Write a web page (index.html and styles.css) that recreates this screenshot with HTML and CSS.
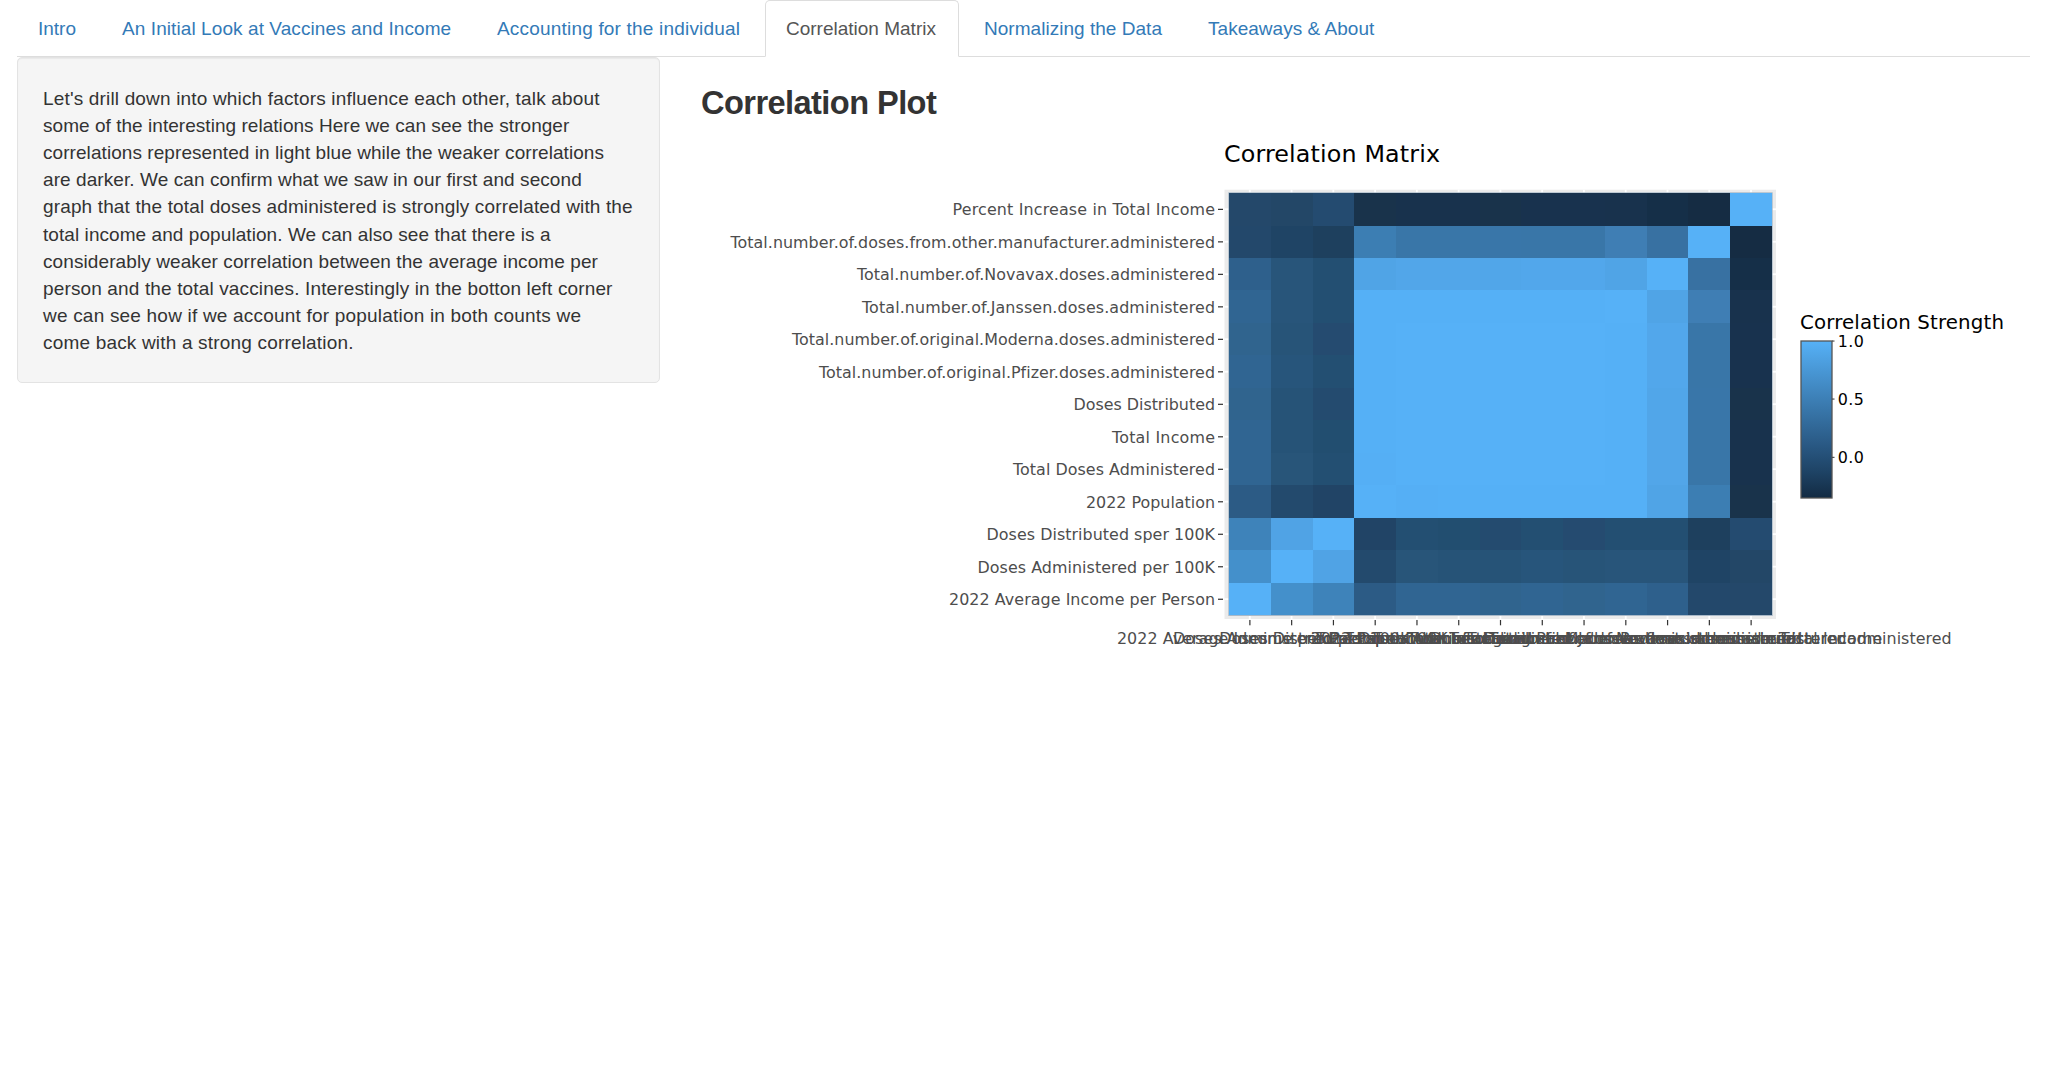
FILE: index.html
```html
<!DOCTYPE html>
<html lang="en">
<head>
<meta charset="utf-8">
<title>Correlation Matrix</title>
<link rel="stylesheet" href="styles.css">
</head>
<body>
<ul class="tabs">
  <li><a class="t1">Intro</a></li>
  <li><a class="t2">An Initial Look at Vaccines and Income</a></li>
  <li><a class="t3">Accounting for the individual</a></li>
  <li><a class="t4 active">Correlation Matrix</a></li>
  <li><a class="t5">Normalizing the Data</a></li>
  <li><a class="t6">Takeaways &amp; About</a></li>
</ul>
<div class="row">
  <aside class="well">
    <p>
      <span class="l1">Let's drill down into which factors influence each other, talk about</span>
      <span class="l2">some of the interesting relations Here we can see the stronger</span>
      <span class="l3">correlations represented in light blue while the weaker correlations</span>
      <span class="l4">are darker. We can confirm what we saw in our first and second</span>
      <span class="l5">graph that the total doses administered is strongly correlated with the</span>
      <span class="l6">total income and population. We can also see that there is a</span>
      <span class="l7">considerably weaker correlation between the average income per</span>
      <span class="l8">person and the total vaccines. Interestingly in the botton left corner</span>
      <span class="l9">we can see how if we account for population in both counts we</span>
      <span class="l10">come back with a strong correlation.</span>
    </p>
  </aside>
  <main class="main">
    <h3>Correlation Plot</h3>
    <svg id="plot" class="plot" width="1329" height="544" viewBox="701 133 1329 544"></svg>
  </main>
</div>
<script src="plot.js"></script>
</body>
</html>
```
FILE: styles.css
```css
* { box-sizing: border-box; }
body {
  margin: 0;
  padding: 0 18px 0 17px;
  background: #fff;
  color: #333;
  font-family: "Liberation Sans", Arial, sans-serif;
  font-size: 19px;
  line-height: 27.2px;
}
.tabs {
  display: flex;
  gap: 3px;
  margin: 0;
  padding: 0;
  height: 57px;
  list-style: none;
  border-bottom: 1px solid #ddd;
}
.tabs a {
  display: block;
  height: 57px;
  padding: 14px 0 0 20px;
  border: 1px solid transparent;
  border-radius: 5px 5px 0 0;
  color: #337ab7;
  white-space: nowrap;
}
.tabs a.active {
  color: #555;
  background: #fff;
  border-color: #ddd #ddd #fff;
}
.tabs .t1 { width: 81px; }
.tabs .t2 { width: 372px; letter-spacing: .085px; }
.tabs .t3 { width: 286px; letter-spacing: .19px; }
.tabs .t4 { width: 194px; }
.tabs .t5 { width: 221px; padding-left: 21px; letter-spacing: .03px; }
.tabs .t6 { width: 210px; padding-left: 21px; letter-spacing: .03px; }
.row { display: flex; gap: 41px; }
.well {
  width: 643px;
  height: 326px;
  padding: 26.6px 0 0 25px;
  background: #f5f5f5;
  border: 1px solid #e3e3e3;
  border-radius: 5px;
  box-shadow: inset 0 1px 1px rgba(0,0,0,.05);
}
.well p { margin: 0; }
.well span { display: block; white-space: nowrap; }
.l1 { letter-spacing: .165px; }
.l2 { letter-spacing: .04px; }
.l3 { letter-spacing: .066px; }
.l4 { letter-spacing: .077px; }
.l5 { letter-spacing: .14px; }
.l6 { letter-spacing: .068px; }
.l7 { letter-spacing: .094px; }
.l8 { letter-spacing: .14px; }
.l9 { letter-spacing: .2px; }
.l10 { letter-spacing: .18px; }
.main { width: 1329px; }
h3 {
  height: 76px;
  margin: 0;
  padding-top: 28px;
  font-size: 32.6px;
  line-height: 36px;
  font-weight: bold;
  letter-spacing: -0.57px;
}
.plot { display: block; font-family: "DejaVu Sans", Verdana, sans-serif; font-variant-ligatures: none; }
.tick { font-size: 15.9px; fill: #4d4d4d; }
.legend-tick { font-size: 15.9px; fill: #000; }
.title { font-size: 23.8px; fill: #000; }
.legend-title { font-size: 19.8px; fill: #000; }
```
FILE: plot.js
```js
const NS = 'http://www.w3.org/2000/svg';
const svg = document.getElementById('plot');
function add(tag, attrs, text) {
  const e = document.createElementNS(NS, tag);
  for (const k in attrs) e.setAttribute(k, attrs[k]);
  if (text) e.textContent = text;
  svg.appendChild(e);
  return e;
}

// Variable names with their label widths, bottom to top / left to right.
const vars = [
  ['2022 Average Income per Person', 266],
  ['Doses Administered per 100K', 237.5],
  ['Doses Distributed sper 100K', 228.5],
  ['2022 Population', 129],
  ['Total Doses Administered', 202],
  ['Total Income', 103],
  ['Doses Distributed', 141.5],
  ['Total.number.of.original.Pfizer.doses.administered', 396],
  ['Total.number.of.original.Moderna.doses.administered', 423],
  ['Total.number.of.Janssen.doses.administered', 353],
  ['Total.number.of.Novavax.doses.administered', 358],
  ['Total.number.of.doses.from.other.manufacturer.administered', 484.5],
  ['Percent Increase in Total Income', 262.5]
];

// Upper triangle of the symmetric matrix, one row per variable.
const upper = [
  '56b1f7 4490cb 3e83ba 2c5b85 306592 306592 30648e 306592 30648e 306592 2e608c 23486b 24486a',
  '56b1f7 50a3e5 234a6d 285579 265377 265377 27557b 275478 28557a 28557a 1f4465 234767',
  '56b1f7 214466 234f72 224e70 244b6f 234f72 254b70 234f72 234f72 1e405e 244b70',
  '56b1f7 55aff5 55b0f6 55b0f6 55b0f6 55b0f6 55b0f6 50a4e6 3c7eb3 19334b',
  '56b1f7 56b1f7 56b1f7 56b1f7 56b1f7 55b0f6 52a6e9 3976a8 18324d',
  '56b1f7 56b1f7 56b1f7 56b1f7 55b0f6 52a6e9 3976a8 18324d',
  '56b1f7 56b1f7 56b1f7 55b0f6 51a6e9 3976a9 19334b',
  '56b1f7 56b1f7 55b0f6 52a7eb 3976a8 18324e',
  '56b1f7 55b0f6 52a7eb 3976a8 18324e',
  '56b1f7 50a4e6 3f7eb4 18324d',
  '56b1f7 3871a2 152f48',
  '56b1f7 152c43',
  '56b1f7'
].map(r => r.split(' '));

const X0 = 1229, Y1 = 615.4, CW = 41.77, CH = 32.49;
const xEdge = i => Math.round(X0 + i * CW);
const yEdge = i => Math.round(Y1 - i * CH);

add('text', { x: 1224, y: 161.5, class: 'title', textLength: 216 }, 'Correlation Matrix');
add('rect', { x: 1224.5, y: 189.7, width: 551.5, height: 429.3, fill: '#ebebeb' });
for (let i = 0; i < 13; i++) {
  const cx = X0 + (i + .5) * CW, cy = Y1 - (i + .5) * CH;
  add('rect', { x: cx - 1, y: 189.7, width: 1.8, height: 429.3, fill: '#fff' });
  add('rect', { x: 1224.5, y: cy - .9, width: 551.5, height: 1.8, fill: '#fff' });
  add('rect', { x: 1218, y: cy - .5, width: 5, height: 1.2, fill: '#333' });
  add('rect', { x: cx - .6, y: 620, width: 1.2, height: 5.3, fill: '#333' });
}
add('rect', { x: 1228.3, y: 192.3, width: 544.4, height: 423.7, fill: '#a9b9c8' });
for (let r = 0; r < 13; r++)
  for (let c = 0; c < 13; c++) {
    const a = Math.min(r, c), b = Math.max(r, c);
    add('rect', {
      x: xEdge(c), y: yEdge(r + 1),
      width: xEdge(c + 1) - xEdge(c), height: yEdge(r) - yEdge(r + 1),
      fill: '#' + upper[a][b - a]
    });
  }
vars.forEach(([name, w], i) => {
  add('text', { x: 1215 - w, y: Y1 - (i + .5) * CH + 5.9, class: 'tick', textLength: w }, name);
  add('text', { x: X0 + (i + .5) * CW - w / 2, y: 644.2, class: 'tick', textLength: w }, name);
});

add('text', { x: 1800, y: 328.6, class: 'legend-title', textLength: 204 }, 'Correlation Strength');
const grad = add('linearGradient', { id: 'ramp', x1: 0, y1: 0, x2: 0, y2: 1 });
['#56b1f7', '#4a9ad9', '#3f84bc', '#346e9f', '#295883', '#1e4365', '#132b43'].forEach((c, i, all) => {
  const s = document.createElementNS(NS, 'stop');
  s.setAttribute('offset', i / (all.length - 1));
  s.setAttribute('stop-color', c);
  grad.appendChild(s);
});
add('rect', { x: 1801, y: 341, width: 31, height: 157, fill: 'url(#ramp)', stroke: '#555', 'stroke-width': 1.3 });
[['1.0', 341], ['0.5', 399], ['0.0', 457.3]].forEach(([t, y]) => {
  add('rect', { x: 1832, y: y - .5, width: 2.5, height: 1.1, fill: '#444' });
  add('text', { x: 1837.8, y: y + 5.8, class: 'legend-tick', textLength: 26 }, t);
});
```
